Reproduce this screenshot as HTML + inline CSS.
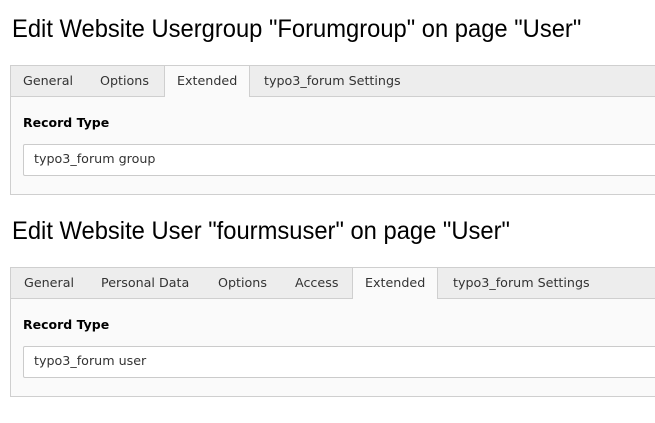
<!DOCTYPE html>
<html><head><style>
body{margin:0;width:655px;height:423px;background:#fff;position:relative;overflow:hidden;font-family:"DejaVu Sans",Verdana,sans-serif;font-size:12.7px;color:#333}
.h{position:absolute;left:12px;font-family:"Liberation Sans",sans-serif;font-size:25px;color:#000;transform-origin:0 0;white-space:nowrap}
.panel{position:absolute;left:10px;width:660px;border:1px solid #cfcfcf;background:#fafafa}
.tabs{position:absolute;left:0;top:0;right:0;height:30px;background:#ededed;border-bottom:1px solid #cfcfcf}
.t{position:absolute;top:7px;white-space:nowrap;color:#333}
.act{position:absolute;top:-1px;height:31px;background:#fafafa;border:1px solid #cfcfcf;border-bottom:none}
.lbl{position:absolute;left:12px;font-weight:bold;color:#000;font-size:12.5px}
.inp{position:absolute;left:12px;width:660px;height:30px;background:#fff;border:1px solid #cbcbcb;border-radius:2px}
.inp span{position:absolute;left:10px;top:6px}
</style></head><body>
<div class="h" style="top:15px;transform:scaleX(0.95)">Edit Website Usergroup "Forumgroup" on page "User"</div>
<div class="panel" style="top:65px;height:128px">
 <div class="tabs"></div>
 <div class="act" style="left:153px;width:84px"></div>
 <div class="t" style="left:12px">General</div>
 <div class="t" style="left:89px">Options</div>
 <div class="t" style="left:166px">Extended</div>
 <div class="t" style="left:253px">typo3_forum Settings</div>
 <div class="lbl" style="top:49px">Record Type</div>
 <div class="inp" style="top:78px"><span>typo3_forum group</span></div>
</div>
<div class="h" style="top:217px;transform:scaleX(0.95)">Edit Website User "fourmsuser" on page "User"</div>
<div class="panel" style="top:267px;height:128px">
 <div class="tabs"></div>
 <div class="act" style="left:341px;width:84px"></div>
 <div class="t" style="left:13px">General</div>
 <div class="t" style="left:90px">Personal Data</div>
 <div class="t" style="left:207px">Options</div>
 <div class="t" style="left:284px">Access</div>
 <div class="t" style="left:354px">Extended</div>
 <div class="t" style="left:442px">typo3_forum Settings</div>
 <div class="lbl" style="top:49px">Record Type</div>
 <div class="inp" style="top:78px"><span>typo3_forum user</span></div>
</div>
</body></html>
